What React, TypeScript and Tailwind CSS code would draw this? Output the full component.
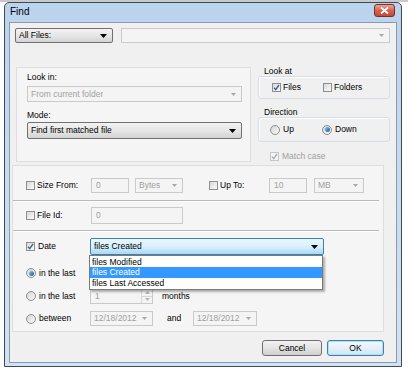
import React from "react";

type ComboKind = "button" | "disabled" | "focus";

const Arrow = ({ gray }: { gray?: boolean }) =>
  gray ? (
    <svg width="5" height="3" viewBox="0 0 5 3" className="shrink-0">
      <path d="M0 0h5L2.5 3z" fill="#a8a8a8" />
    </svg>
  ) : (
    <svg width="7" height="4" viewBox="0 0 7 4" className="shrink-0">
      <path d="M0 0h7L3.5 4z" fill="#000" />
    </svg>
  );

const Combo = ({ w, h, text, kind }: { w: string; h: string; text?: string; kind: ComboKind }) => {
  const look =
    kind === "button"
      ? "border-[#707070] bg-gradient-to-b from-[#f3f3f3] via-[#e6e6e6] to-[#d4d4d4] text-black rounded-[2px]"
      : kind === "focus"
      ? "border-[#3c7fb1] bg-gradient-to-b from-[#eaf6fd] via-[#d9f0fc] to-[#a7d9f5] text-black rounded-[2px]"
      : "border-[#cacaca] bg-[#f4f4f4] text-[#a0a0a0]";
  return (
    <div className={`${w} ${h} flex shrink-0 items-center justify-between border pl-[3px] pr-[5px] ${look}`}>
      <span className="truncate leading-none">{text}</span>
      <Arrow gray={kind === "disabled"} />
    </div>
  );
};

const Field = ({ w, h, text }: { w: string; h: string; text: string }) => (
  <div className={`${w} ${h} flex shrink-0 items-center border border-[#cacaca] bg-[#f4f4f4] pl-[4px] text-[#a0a0a0] leading-none`}>
    {text}
  </div>
);

const Spinner = ({ text }: { text: string }) => (
  <div className="flex h-[16px] w-[63px] shrink-0 border border-[#cacaca] bg-[#f4f4f4] text-[#a0a0a0]">
    <span className="flex flex-1 items-center pl-[4px] leading-none">{text}</span>
    <div className="flex w-[11px] flex-col border-l border-[#d6d6d6]">
      <div className="flex flex-1 items-center justify-center border-b border-[#d6d6d6]">
        <svg width="5" height="3" viewBox="0 0 5 3"><path d="M0 3h5L2.5 0z" fill="#b8b8b8" /></svg>
      </div>
      <div className="flex flex-1 items-center justify-center">
        <svg width="5" height="3" viewBox="0 0 5 3"><path d="M0 0h5L2.5 3z" fill="#b8b8b8" /></svg>
      </div>
    </div>
  </div>
);

const Check = ({ checked, disabled }: { checked?: boolean; disabled?: boolean }) => (
  <span
    className={`flex h-[9px] w-[9px] shrink-0 items-center justify-center border ${
      disabled ? "border-[#c6c6c6] bg-[#f4f4f4]" : "border-[#8e8f8f] bg-gradient-to-br from-[#d8d8d8] to-[#fbfbfb]"
    }`}
  >
    {checked && (
      <svg width="7" height="7" viewBox="0 0 7 7">
        <path d="M1 3.6l1.7 2L6 1" stroke={disabled ? "#ababab" : "#3d5b8c"} strokeWidth="1.3" fill="none" />
      </svg>
    )}
  </span>
);

const Radio = ({ on }: { on?: boolean }) => (
  <span className="flex h-[10px] w-[10px] shrink-0 items-center justify-center rounded-full border border-[#8e8f8f] bg-gradient-to-br from-[#d4d4d4] to-[#fbfbfb]">
    {on && <span className="h-[5px] w-[5px] rounded-full bg-gradient-to-br from-[#7cc2f0] to-[#1a5f9c]" />}
  </span>
);

const Separator = () => <div className="mr-[4px] h-[2px] border-t border-b border-t-[#b9b9b9] border-b-white" />;

export default function App() {
  return (
    <div className="h-[373px] w-[408px] overflow-hidden border-t-2 border-[#c9c9c9] bg-white pl-[4px] font-['Liberation_Sans',Arial,sans-serif] text-[8.5px] text-black">
      <div className="flex h-[365px] w-[398px] flex-col rounded-t-[5px] border border-[#3b4b5a] bg-gradient-to-b from-[#bcd3ee] to-[#d3e2f2] px-[4px] pb-[3px]">
        {/* title bar */}
        <div className="flex h-[19px] items-start justify-between pl-[1px] pr-[2px]">
          <span className="pt-[4px] text-[10px] leading-none">Find</span>
          <div className="mt-[1px] flex h-[13px] w-[21px] items-center justify-center rounded-[3px] border border-[#7a3024] bg-gradient-to-b from-[#eaa595] via-[#d3634f] to-[#c24a36]">
            <svg width="9" height="7" viewBox="0 0 9 7">
              <path d="M1 0.5l7 6M8 0.5l-7 6" stroke="#fff" strokeWidth="1.8" />
            </svg>
          </div>
        </div>

        {/* client area */}
        <div className="flex flex-1 flex-col border border-[#8a9bb0] bg-[#f0f0f0]">
          <div className="mt-[5px] flex gap-[8px] pl-[5px]">
            <Combo w="w-[98px]" h="h-[15px]" text="All Files:" kind="button" />
            <Combo w="w-[269px]" h="h-[15px]" kind="disabled" />
          </div>

          <div className="mt-[23px] flex items-start">
            <div className="ml-[6px] mt-[1px] flex h-[95px] w-[235px] flex-col border border-[#dedede] bg-[#f5f5f5] pl-[10px] pt-[4px]">
              <span className="h-[10px] leading-[10px]">Look in:</span>
              <div className="mt-[4px]">
                <Combo w="w-[215px]" h="h-[16px]" text="From current folder" kind="disabled" />
              </div>
              <span className="mt-[8px] h-[10px] leading-[10px]">Mode:</span>
              <div className="mt-[2px]">
                <Combo w="w-[215px]" h="h-[17px]" text="Find first matched file" kind="button" />
              </div>
            </div>

            <div className="ml-[7px] flex w-[132px] flex-col">
              <span className="h-[10px] pl-[6px] leading-[10px]">Look at</span>
              <div className="flex h-[23px] items-center rounded-[3px] border border-[#d5dfe5] pl-[13px] shadow-[inset_1px_1px_0_#fff]">
                <label className="flex w-[51px] items-center gap-[2px]">
                  <Check checked />
                  <span>Files</span>
                </label>
                <label className="flex items-center gap-[2px]">
                  <Check />
                  <span>Folders</span>
                </label>
              </div>
              <span className="mt-[8px] h-[10px] pl-[6px] leading-[10px]">Direction</span>
              <div className="flex h-[25px] items-center rounded-[3px] border border-[#d5dfe5] pl-[11px] shadow-[inset_1px_1px_0_#fff]">
                <label className="flex w-[52px] items-center gap-[3px]">
                  <Radio />
                  <span>Up</span>
                </label>
                <label className="flex items-center gap-[3px]">
                  <Radio on />
                  <span>Down</span>
                </label>
              </div>
              <label className="mt-[9px] flex h-[10px] items-center gap-[3px] pl-[12px] text-[#a0a0a0]">
                <Check checked disabled />
                <span>Match case</span>
              </label>
            </div>
          </div>

          {/* search options */}
          <div className="relative ml-[2px] mt-[3px] flex h-[167px] w-[372px] flex-col border border-[#dedede] bg-[#f5f5f5]">
            <div className="mt-[12px] flex h-[15px] items-center pl-[13px]">
              <label className="flex w-[65px] items-center gap-[2px]">
                <Check />
                <span>Size From:</span>
              </label>
              <Field w="w-[38px]" h="h-[15px]" text="0" />
              <div className="ml-[6px]">
                <Combo w="w-[48px]" h="h-[15px]" text="Bytes" kind="disabled" />
              </div>
              <label className="ml-[26px] flex w-[60px] items-center gap-[2px]">
                <Check />
                <span>Up To:</span>
              </label>
              <Field w="w-[38px]" h="h-[15px]" text="10" />
              <div className="ml-[7px]">
                <Combo w="w-[50px]" h="h-[15px]" text="MB" kind="disabled" />
              </div>
            </div>
            <div className="mt-[7px]">
              <Separator />
            </div>
            <div className="mt-[5px] flex h-[17px] items-center pl-[13px]">
              <label className="flex w-[65px] items-center gap-[2px]">
                <Check />
                <span>File Id:</span>
              </label>
              <Field w="w-[92px]" h="h-[17px]" text="0" />
            </div>
            <div className="mt-[6px]">
              <Separator />
            </div>
            <div className="mt-[6px] flex h-[17px] items-center pl-[13px]">
              <label className="flex w-[64px] items-center gap-[3px]">
                <Check checked />
                <span>Date</span>
              </label>
              <Combo w="w-[234px]" h="h-[17px]" text="files Created" kind="focus" />
            </div>
            {/* first row: its spinner is hidden by the open list */}
            <div className="mt-[10px] flex h-[16px] items-center pl-[13px]">
              <label className="flex w-[64px] items-center gap-[3px]">
                <Radio on />
                <span>in the last</span>
              </label>
            </div>
            <div className="mt-[7px] flex h-[16px] items-center pl-[13px]">
              <label className="flex w-[64px] items-center gap-[3px]">
                <Radio />
                <span>in the last</span>
              </label>
              <Spinner text="1" />
              <span className="ml-[9px]">months</span>
            </div>
            <div className="mt-[7px] flex h-[15px] items-center pl-[13px]">
              <label className="flex w-[64px] items-center gap-[3px]">
                <Radio />
                <span>between</span>
              </label>
              <Combo w="w-[63px]" h="h-[15px]" text="12/18/2012" kind="disabled" />
              <span className="ml-[14px] w-[26px]">and</span>
              <Combo w="w-[64px]" h="h-[15px]" text="12/18/2012" kind="disabled" />
            </div>

            {/* open dropdown list */}
            <div className="absolute left-[76px] top-[89px] flex w-[234px] flex-col border border-[#7a7a7a] bg-white py-[1px] shadow-[2px_2px_2px_rgba(0,0,0,0.3)]">
              <span className="h-[10px] pl-[2px] leading-[10px]">files Modified</span>
              <span className="h-[11px] bg-[#3399ff] pl-[2px] leading-[11px] text-white">files Created</span>
              <span className="h-[10px] pl-[2px] leading-[10px]">files Last Accessed</span>
            </div>
          </div>

          <div className="mt-[8px] flex justify-end gap-[5px] pr-[12px]">
            <button className="flex h-[16px] w-[60px] items-center justify-center rounded-[3px] border border-[#707070] bg-gradient-to-b from-[#f2f2f2] via-[#e4e4e4] to-[#cfcfcf]">
              Cancel
            </button>
            <button className="flex h-[16px] w-[57px] items-center justify-center rounded-[3px] border border-[#3c7fb1] bg-gradient-to-b from-[#f3f9fd] via-[#e3f0fa] to-[#cfe5f5] shadow-[inset_0_0_0_1px_#b6dcf5]">
              OK
            </button>
          </div>
        </div>
      </div>
    </div>
  );
}
